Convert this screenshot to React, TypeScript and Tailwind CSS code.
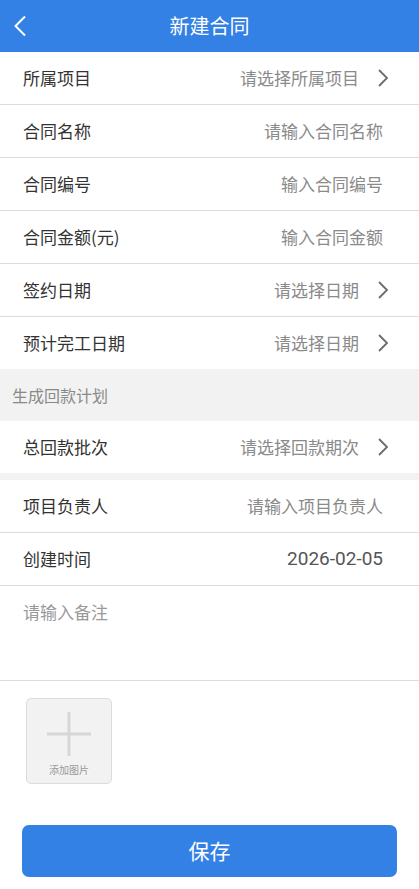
const font = { fontFamily: '"Noto Sans CJK SC", "Noto Sans", sans-serif' };

function ChevronRight() {
  return (
    <svg width="12" height="20" viewBox="0 0 12 20" className="ml-[18px] shrink-0">
      <path d="M2 2 L10 10 L2 18" fill="none" stroke="#6b6b6b" strokeWidth="1.8" />
    </svg>
  );
}

function Row({ label, value, arrow, date }: { label: string; value: string; arrow?: boolean; date?: boolean }) {
  return (
    <div className="flex items-center h-[53px] pl-[23px] pr-[30px] border-b border-[#dcdcdc] bg-white">
      <span className="text-[17px] text-[#333]">{label}</span>
      <div className={`flex-1 flex items-center justify-end ${arrow ? "" : "mr-[6px]"}`}>
        {date ? (
          <span className="text-[19px] text-[#555]" style={{ fontFamily: "Roboto, sans-serif" }}>
            {value}
          </span>
        ) : (
          <span className="text-[17px] text-[#8a8a8a]">{value}</span>
        )}
        {arrow && <ChevronRight />}
      </div>
    </div>
  );
}

export default function App() {
  return (
    <div className="w-[419px] h-[889px] bg-white flex flex-col" style={font}>
      {/* 顶栏 */}
      <div className="h-[52px] bg-[#3381e5] flex items-center justify-center relative">
        <svg width="14" height="22" viewBox="0 0 14 22" className="absolute left-[13px] top-[15px]">
          <path d="M12 1.5 L2.5 11 L12 20.5" fill="none" stroke="#fff" strokeWidth="2" />
        </svg>
        <span className="text-white text-[20px]">新建合同</span>
      </div>

      <Row label="所属项目" value="请选择所属项目" arrow />
      <Row label="合同名称" value="请输入合同名称" />
      <Row label="合同编号" value="输入合同编号" />
      <Row label="合同金额(元)" value="输入合同金额" />
      <Row label="签约日期" value="请选择日期" arrow />
      <div className="flex items-center h-[52px] pl-[23px] pr-[30px] bg-white">
        <span className="text-[17px] text-[#333]">预计完工日期</span>
        <div className="flex-1 flex items-center justify-end">
          <span className="text-[17px] text-[#8a8a8a]">请选择日期</span>
          <ChevronRight />
        </div>
      </div>

      <div className="h-[52px] bg-[#f2f2f2] flex items-center pl-[12px]">
        <span className="text-[16px] text-[#8a8a8a]">生成回款计划</span>
      </div>

      <div className="flex items-center h-[52px] pl-[23px] pr-[30px] bg-white">
        <span className="text-[17px] text-[#333]">总回款批次</span>
        <div className="flex-1 flex items-center justify-end">
          <span className="text-[17px] text-[#8a8a8a]">请选择回款期次</span>
          <ChevronRight />
        </div>
      </div>
      <div className="h-[7px] bg-[#f2f2f2]" />

      <Row label="项目负责人" value="请输入项目负责人" />
      <Row label="创建时间" value="2026-02-05" date />

      <div className="h-[95px] border-b border-[#dcdcdc] pl-[23px] pt-[13px]">
        <span className="text-[17px] text-[#999]">请输入备注</span>
      </div>

      {/* 上传 */}
      <div className="pl-[26px] pt-[17px]">
        <div className="w-[86px] h-[86px] rounded-[5px] border border-[#dcdcdc] bg-[#f2f2f2] flex flex-col items-center">
          <svg width="44" height="44" viewBox="0 0 44 44" className="mt-[13px]">
            <rect x="0" y="20.5" width="44" height="3" fill="#d6d6d6" />
            <rect x="20.5" y="0" width="3" height="44" fill="#d6d6d6" />
          </svg>
          <span className="text-[10px] text-[#999] mt-[9px] leading-none">添加图片</span>
        </div>
      </div>

      <div className="px-[22px] pt-[41px]">
        <button className="w-full h-[52px] rounded-[7px] bg-[#3381e5] text-white text-[21px]" style={font}>
          保存
        </button>
      </div>
    </div>
  );
}
